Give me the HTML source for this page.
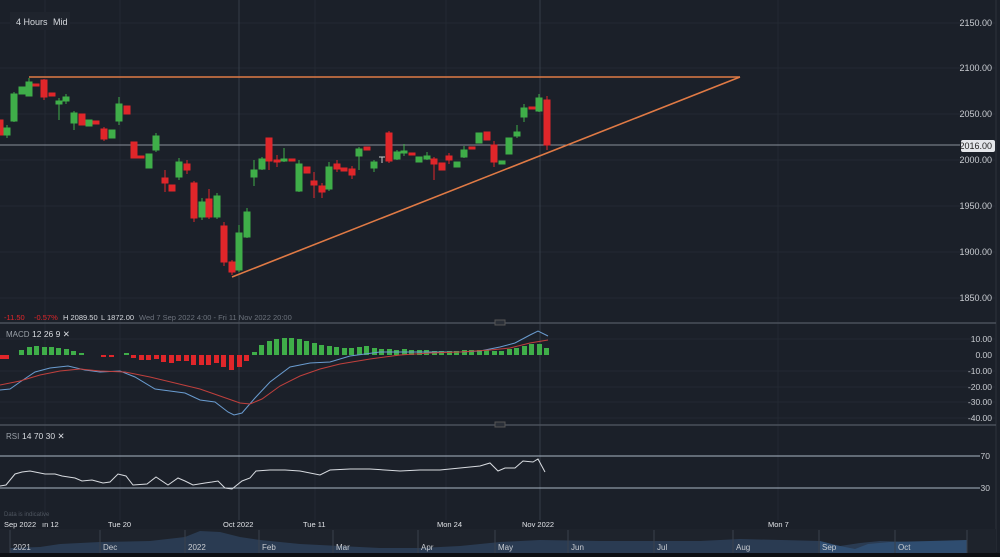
<!DOCTYPE html>
<html><head><meta charset="utf-8">
<style>
html,body{margin:0;padding:0;background:#1b2029;width:1000px;height:557px;overflow:hidden}
svg{display:block}
text{font-family:"Liberation Sans",sans-serif}
</style></head><body>
<svg width="1000" height="557" viewBox="0 0 1000 557" xmlns="http://www.w3.org/2000/svg">
<rect width="1000" height="557" fill="#1b2029"/>
<!-- grid -->
<g stroke="#232933" stroke-width="1">
<line x1="0" y1="23" x2="995" y2="23"/><line x1="0" y1="68" x2="995" y2="68"/><line x1="0" y1="114" x2="995" y2="114"/><line x1="0" y1="160" x2="995" y2="160"/><line x1="0" y1="206" x2="995" y2="206"/><line x1="0" y1="252" x2="995" y2="252"/><line x1="0" y1="298" x2="995" y2="298"/>
<line x1="0" y1="339" x2="995" y2="339"/><line x1="0" y1="371" x2="995" y2="371"/><line x1="0" y1="387" x2="995" y2="387"/><line x1="0" y1="402" x2="995" y2="402"/><line x1="0" y1="418" x2="995" y2="418"/>
<line x1="45" y1="0" x2="45" y2="520"/><line x1="120" y1="0" x2="120" y2="520"/><line x1="315" y1="0" x2="315" y2="520"/><line x1="446" y1="0" x2="446" y2="520"/><line x1="778" y1="0" x2="778" y2="520"/>
</g>
<g stroke="#363d48"><line x1="239" y1="0" x2="239" y2="520"/><line x1="540" y1="0" x2="540" y2="520"/></g>
<line x1="996" y1="0" x2="996" y2="552" stroke="#2c323c"/>
<!-- top label -->
<rect x="10" y="12" width="60" height="18" fill="#1f242d"/>
<text x="16" y="25" font-size="9" fill="#d8dbe0">4 Hours</text>
<text x="53" y="25" font-size="9" fill="#d8dbe0">Mid</text>
<!-- price line -->
<line x1="0" y1="145" x2="960" y2="145" stroke="#8a9099" stroke-width="1"/>
<rect x="961" y="140" width="34" height="12" rx="2" fill="#e4e6ea"/>
<text x="992" y="149" font-size="9" fill="#222" text-anchor="end">2016.00</text>
<g font-size="9" fill="#c9ccd1" text-anchor="end">
<text x="992" y="26">2150.00</text><text x="992" y="71">2100.00</text><text x="992" y="117">2050.00</text><text x="992" y="163">2000.00</text><text x="992" y="209">1950.00</text><text x="992" y="255">1900.00</text><text x="992" y="301">1850.00</text>
</g>
<!-- trend lines -->
<g stroke="#e07a45" stroke-width="1.6" fill="none">
<line x1="29" y1="77" x2="740" y2="77"/>
<line x1="232" y1="277" x2="740" y2="77"/>
</g>
<!-- candles -->
<g stroke-width="1">
<g fill="#3fae49" stroke="#3fae49">
<line x1="7" y1="125" x2="7" y2="138"/><rect x="4" y="128" width="6" height="7"/>
<line x1="14" y1="92" x2="14" y2="122"/><rect x="11" y="94" width="6" height="27"/>
<rect x="19" y="87" width="6" height="7"/>
<line x1="29" y1="78" x2="29" y2="96"/><rect x="26" y="82" width="6" height="14"/>
<line x1="59" y1="98" x2="59" y2="120"/><rect x="56" y="101" width="6" height="3"/>
<line x1="66" y1="94" x2="66" y2="104"/><rect x="63" y="97" width="6" height="4"/>
<line x1="74" y1="111" x2="74" y2="130"/><rect x="71" y="113" width="6" height="10"/>
<rect x="86" y="120" width="6" height="6"/>
<rect x="109" y="130" width="6" height="8"/>
<line x1="119" y1="97" x2="119" y2="125"/><rect x="116" y="104" width="6" height="17"/>
<rect x="146" y="154" width="6" height="14"/>
<line x1="156" y1="133" x2="156" y2="152"/><rect x="153" y="136" width="6" height="14"/>
<line x1="179" y1="158" x2="179" y2="180"/><rect x="176" y="162" width="6" height="15"/>
<line x1="202" y1="198" x2="202" y2="220"/><rect x="199" y="202" width="6" height="15"/>
<line x1="217" y1="193" x2="217" y2="219"/><rect x="214" y="196" width="6" height="21"/>
<line x1="239" y1="225" x2="239" y2="272"/><rect x="236" y="233" width="6" height="37"/>
<line x1="247" y1="208" x2="247" y2="238"/><rect x="244" y="212" width="6" height="25"/>
<line x1="254" y1="160" x2="254" y2="186"/><rect x="251" y="170" width="6" height="7"/>
<line x1="262" y1="157" x2="262" y2="170"/><rect x="259" y="159" width="6" height="10"/>
<line x1="284" y1="148" x2="284" y2="162"/><rect x="281" y="159" width="6" height="2"/>
<line x1="299" y1="160" x2="299" y2="192"/><rect x="296" y="164" width="6" height="27"/>
<line x1="329" y1="162" x2="329" y2="191"/><rect x="326" y="167" width="6" height="22"/>
<line x1="359" y1="147" x2="359" y2="170"/><rect x="356" y="149" width="6" height="7"/>
<line x1="374" y1="160" x2="374" y2="172"/><rect x="371" y="162" width="6" height="6"/>
<line x1="397" y1="150" x2="397" y2="160"/><rect x="394" y="152" width="6" height="7"/>
<line x1="404" y1="144" x2="404" y2="156"/><rect x="401" y="151" width="6" height="2"/>
<rect x="416" y="157" width="6" height="5"/>
<line x1="427" y1="152" x2="427" y2="160"/><rect x="424" y="156" width="6" height="3"/>
<rect x="454" y="162" width="6" height="5"/>
<line x1="464" y1="146" x2="464" y2="158"/><rect x="461" y="150" width="6" height="7"/>
<rect x="476" y="133" width="6" height="10"/>
<rect x="499" y="161" width="6" height="3"/>
<rect x="506" y="138" width="6" height="16"/>
<line x1="517" y1="125" x2="517" y2="138"/><rect x="514" y="132" width="6" height="4"/>
<line x1="524" y1="104" x2="524" y2="122"/><rect x="521" y="108" width="6" height="9"/>
<line x1="539" y1="94" x2="539" y2="112"/><rect x="536" y="98" width="6" height="13"/>
</g>
<g fill="#e0262a" stroke="#e0262a">
<rect x="-3" y="120" width="6" height="15"/>
<rect x="33" y="84" width="6" height="2"/>
<line x1="44" y1="79" x2="44" y2="100"/><rect x="41" y="80" width="6" height="17"/>
<rect x="49" y="93" width="6" height="3"/>
<rect x="79" y="114" width="6" height="11"/>
<rect x="93" y="121" width="6" height="3"/>
<line x1="104" y1="127" x2="104" y2="141"/><rect x="101" y="129" width="6" height="10"/>
<rect x="124" y="106" width="6" height="8"/>
<rect x="131" y="142" width="6" height="16"/>
<rect x="138" y="156" width="6" height="2"/>
<line x1="165" y1="170" x2="165" y2="192"/><rect x="162" y="178" width="6" height="5"/>
<rect x="169" y="185" width="6" height="6"/>
<line x1="187" y1="160" x2="187" y2="174"/><rect x="184" y="164" width="6" height="6"/>
<line x1="194" y1="181" x2="194" y2="222"/><rect x="191" y="183" width="6" height="35"/>
<line x1="209" y1="189" x2="209" y2="219"/><rect x="206" y="199" width="6" height="18"/>
<line x1="224" y1="222" x2="224" y2="266"/><rect x="221" y="226" width="6" height="36"/>
<line x1="232" y1="260" x2="232" y2="275"/><rect x="229" y="262" width="6" height="10"/>
<line x1="269" y1="138" x2="269" y2="170"/><rect x="266" y="138" width="6" height="23"/>
<line x1="277" y1="155" x2="277" y2="167"/><rect x="274" y="160" width="6" height="2"/>
<rect x="289" y="159" width="6" height="2"/>
<rect x="304" y="167" width="6" height="6"/>
<line x1="314" y1="172" x2="314" y2="198"/><rect x="311" y="181" width="6" height="4"/>
<line x1="322" y1="183" x2="322" y2="198"/><rect x="319" y="186" width="6" height="6"/>
<line x1="337" y1="160" x2="337" y2="172"/><rect x="334" y="164" width="6" height="5"/>
<rect x="341" y="168" width="6" height="3"/>
<line x1="352" y1="166" x2="352" y2="179"/><rect x="349" y="169" width="6" height="6"/>
<rect x="364" y="147" width="6" height="3"/>
<line x1="389" y1="131" x2="389" y2="163"/><rect x="386" y="133" width="6" height="28"/>
<rect x="409" y="153" width="6" height="2"/>
<line x1="434" y1="157" x2="434" y2="180"/><rect x="431" y="159" width="6" height="5"/>
<rect x="439" y="163" width="6" height="7"/>
<line x1="449" y1="153" x2="449" y2="164"/><rect x="446" y="156" width="6" height="4"/>
<rect x="469" y="147" width="6" height="2"/>
<rect x="484" y="132" width="6" height="8"/>
<line x1="494" y1="141" x2="494" y2="167"/><rect x="491" y="145" width="6" height="17"/>
<rect x="529" y="107" width="6" height="2"/>
<line x1="547" y1="96" x2="547" y2="150"/><rect x="544" y="100" width="6" height="45"/>
</g>
<line x1="379" y1="157" x2="385" y2="157" stroke="#ccc"/><line x1="382" y1="157" x2="382" y2="163" stroke="#ccc"/>
</g>
<!-- info row -->
<g font-size="7.5">
<text x="4" y="320" fill="#e0262a">-11.50</text>
<text x="34" y="320" fill="#e0262a">-0.57%</text>
<text x="63" y="320" fill="#d8dbe0">H 2089.50</text>
<text x="101" y="320" fill="#d8dbe0">L 1872.00</text>
<text x="139" y="320" fill="#6c727c">Wed 7 Sep 2022 4:00 - Fri 11 Nov 2022 20:00</text>
</g>
<!-- panel separators -->
<line x1="0" y1="323" x2="996" y2="323" stroke="#4a505a" stroke-width="1.5"/>
<line x1="0" y1="425" x2="996" y2="425" stroke="#4a505a" stroke-width="1.5"/>
<rect x="495" y="320" width="10" height="5" fill="#2a2f38" stroke="#555"/>
<rect x="495" y="422" width="10" height="5" fill="#2a2f38" stroke="#555"/>
<!-- MACD -->
<text x="6" y="337" font-size="8" fill="#9aa0a8">MACD</text>
<text x="32" y="337" font-size="8.5" fill="#d8dbe0">12  26  9  ✕</text>
<g fill="#3fae49">
<rect x="19" y="350" width="5" height="5"/><rect x="27" y="347" width="5" height="8"/><rect x="34" y="346" width="5" height="9"/><rect x="42" y="347" width="5" height="8"/><rect x="49" y="347" width="5" height="8"/><rect x="56" y="348" width="5" height="7"/><rect x="64" y="349" width="5" height="6"/><rect x="71" y="351" width="5" height="4"/><rect x="79" y="353" width="5" height="2"/><rect x="124" y="353" width="5" height="2"/>
<rect x="252" y="352" width="5" height="3"/><rect x="259" y="345" width="5" height="10"/><rect x="267" y="341" width="5" height="14"/><rect x="274" y="339" width="5" height="16"/><rect x="282" y="338" width="5" height="17"/><rect x="289" y="338" width="5" height="17"/><rect x="297" y="339" width="5" height="16"/><rect x="304" y="341" width="5" height="14"/><rect x="312" y="343" width="5" height="12"/><rect x="319" y="345" width="5" height="10"/><rect x="327" y="346" width="5" height="9"/><rect x="334" y="347" width="5" height="8"/><rect x="342" y="348" width="5" height="7"/><rect x="349" y="348" width="5" height="7"/><rect x="357" y="347" width="5" height="8"/><rect x="364" y="346" width="5" height="9"/><rect x="372" y="348" width="5" height="7"/><rect x="379" y="349" width="5" height="6"/><rect x="387" y="349" width="5" height="6"/><rect x="394" y="350" width="5" height="5"/><rect x="402" y="349" width="5" height="6"/><rect x="409" y="350" width="5" height="5"/><rect x="417" y="350" width="5" height="5"/><rect x="424" y="350" width="5" height="5"/><rect x="432" y="351" width="5" height="4"/><rect x="439" y="351" width="5" height="4"/><rect x="447" y="351" width="5" height="4"/><rect x="454" y="351" width="5" height="4"/><rect x="462" y="350" width="5" height="5"/><rect x="469" y="350" width="5" height="5"/><rect x="477" y="350" width="5" height="5"/><rect x="484" y="350" width="5" height="5"/><rect x="492" y="351" width="5" height="4"/><rect x="499" y="351" width="5" height="4"/><rect x="507" y="349" width="5" height="6"/><rect x="514" y="348" width="5" height="7"/><rect x="522" y="346" width="5" height="9"/><rect x="529" y="344" width="5" height="11"/><rect x="537" y="344" width="5" height="11"/><rect x="544" y="348" width="5" height="7"/>
</g>
<g fill="#e0262a">
<rect x="0" y="355" width="9" height="4"/><rect x="101" y="355" width="5" height="2"/><rect x="109" y="355" width="5" height="2"/>
<rect x="131" y="355" width="5" height="3"/><rect x="139" y="355" width="5" height="5"/><rect x="146" y="355" width="5" height="5"/><rect x="154" y="355" width="5" height="4"/><rect x="161" y="355" width="5" height="7"/><rect x="169" y="355" width="5" height="8"/><rect x="176" y="355" width="5" height="6"/><rect x="184" y="355" width="5" height="6"/><rect x="191" y="355" width="5" height="10"/><rect x="199" y="355" width="5" height="10"/><rect x="206" y="355" width="5" height="10"/><rect x="214" y="355" width="5" height="8"/><rect x="221" y="355" width="5" height="12"/><rect x="229" y="355" width="5" height="15"/><rect x="237" y="355" width="5" height="12"/><rect x="244" y="355" width="5" height="6"/>
</g>
<polyline fill="none" stroke="#6a9cd0" stroke-width="1" points="0,390 10,389 20,382 35,372 50,368 68,366 85,370 100,372 120,371 135,377 155,389 170,391 185,393 200,400 215,402 228,412 234,415 242,413 255,398 270,382 290,367 310,363 330,362 350,356 380,352 420,352 460,352 480,351 500,347 515,343 530,335 538,331 548,336"/>
<polyline fill="none" stroke="#c0403d" stroke-width="1" points="0,385 20,381 40,375 60,371 80,369 100,371 125,372 150,377 175,383 200,389 220,396 240,403 250,404 262,399 280,386 300,376 320,369 340,364 370,359 400,355 430,353 460,352 490,350 510,348 530,343 548,340"/>
<g font-size="8.5" fill="#c9ccd1" text-anchor="end">
<text x="992" y="342">10.00</text><text x="992" y="358">0.00</text><text x="992" y="374">-10.00</text><text x="992" y="390">-20.00</text><text x="992" y="405">-30.00</text><text x="992" y="421">-40.00</text>
</g>
<!-- RSI -->
<text x="6" y="439" font-size="8" fill="#9aa0a8">RSI</text>
<text x="22" y="439" font-size="8.5" fill="#d8dbe0">14  70  30  ✕</text>
<line x1="0" y1="456" x2="978" y2="456" stroke="#a8b6c4" stroke-width="1"/>
<line x1="0" y1="488" x2="978" y2="488" stroke="#a8b6c4" stroke-width="1"/>
<g font-size="8.5" fill="#c9ccd1" text-anchor="end"><text x="990" y="459">70</text><text x="990" y="491">30</text></g>
<line x1="978" y1="456" x2="980" y2="456" stroke="#a8b6c4"/><line x1="978" y1="488" x2="980" y2="488" stroke="#a8b6c4"/>
<polyline fill="none" stroke="#d8dbe0" stroke-width="1" points="0,486 6,485 15,474 22,472 30,471 40,473 45,474 55,474 62,476 75,478 82,481 92,480 103,483 110,482 118,474 126,476 133,485 147,484 156,477 168,485 178,478 185,481 193,485 205,483 212,482 218,481 225,488 232,489 242,481 250,478 256,471 270,470 285,470 300,471 320,475 330,470 350,469 370,469 400,471 420,470 440,470 460,468 480,466 490,463 498,471 505,468 515,468 523,461 533,462 538,459 545,472"/>
<!-- footer -->
<text x="4" y="516" font-size="6" fill="#4f5660">Data is indicative</text>
<g font-size="7.5" fill="#e0e2e6">
<text x="4" y="527">Sep 2022</text><text x="42" y="527">ın 12</text><text x="108" y="527">Tue 20</text><text x="223" y="527">Oct 2022</text><text x="303" y="527">Tue 11</text><text x="437" y="527">Mon 24</text><text x="522" y="527">Nov 2022</text><text x="768" y="527">Mon 7</text>
</g>
<rect x="0" y="529" width="996" height="24" fill="#1e232c"/>
<path d="M10,553 L10,548 L40,547 L60,544 L100,542 L150,541 L185,537 L200,531 L220,532 L240,537 L260,540 L300,544 L340,546 L380,548 L420,548 L460,546 L500,542 L540,540 L600,541 L700,541 L740,539 L820,541 L840,546 L860,543 L880,541 L920,542 L955,541 L967,540 L967,553 Z" fill="#2a3b52"/>
<path d="M820,553 L820,541 L835,545 L855,549 L868,544 L890,542 L930,541 L967,540 L967,553 Z" fill="#2f4d70"/>
<g stroke="#3a414c"><line x1="10" y1="530" x2="10" y2="553"/><line x1="100" y1="530" x2="100" y2="553"/><line x1="185" y1="530" x2="185" y2="553"/><line x1="259" y1="530" x2="259" y2="553"/><line x1="333" y1="530" x2="333" y2="553"/><line x1="418" y1="530" x2="418" y2="553"/><line x1="495" y1="530" x2="495" y2="553"/><line x1="568" y1="530" x2="568" y2="553"/><line x1="654" y1="530" x2="654" y2="553"/><line x1="733" y1="530" x2="733" y2="553"/><line x1="819" y1="530" x2="819" y2="553"/><line x1="895" y1="530" x2="895" y2="553"/><line x1="967" y1="530" x2="967" y2="553"/></g>
<g font-size="8" fill="#c9ccd1">
<text x="13" y="550">2021</text><text x="103" y="550">Dec</text><text x="188" y="550">2022</text><text x="262" y="550">Feb</text><text x="336" y="550">Mar</text><text x="421" y="550">Apr</text><text x="498" y="550">May</text><text x="571" y="550">Jun</text><text x="657" y="550">Jul</text><text x="736" y="550">Aug</text><text x="822" y="550">Sep</text><text x="898" y="550">Oct</text>
</g>
<rect x="0" y="553" width="1000" height="4" fill="#0d0f13"/>
</svg>
</body></html>
